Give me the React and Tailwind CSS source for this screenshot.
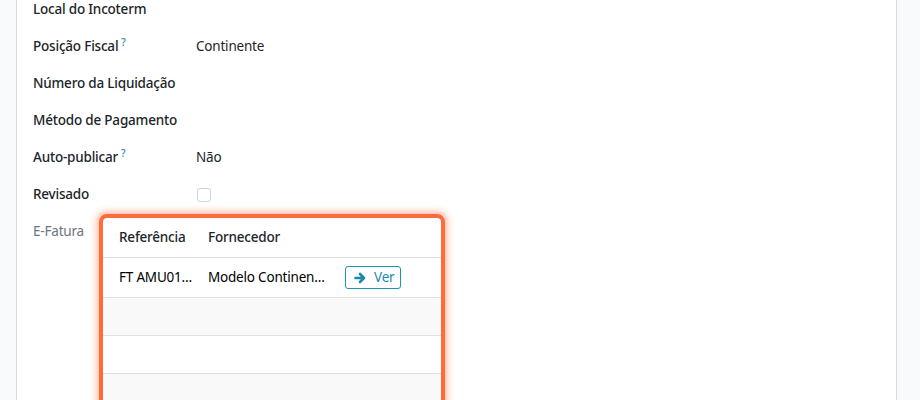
const fields = [
  { label: "Local do Incoterm" },
  { label: "Posição Fiscal", help: true, value: "Continente" },
  { label: "Número da Liquidação" },
  { label: "Método de Pagamento" },
  { label: "Auto-publicar", help: true, value: "Não" },
  { label: "Revisado", checkbox: true },
];

function Field({ field }) {
  return (
    <div className="h-[37px] flex items-center">
      <div className="w-[163px] shrink-0 font-medium text-[#212529]">
        {field.label}
        {field.help && (
          <sup className="ml-[3px] text-[10px] font-medium text-[#1b8aa8]">?</sup>
        )}
      </div>
      <div className="text-[#212529]">
        {field.value}
        {field.checkbox && (
          <div className="ml-[1px] w-[14px] h-[14px] rounded-[3px] border border-[#d0d3d7] bg-white" />
        )}
      </div>
    </div>
  );
}

function ArrowIcon() {
  return (
    <svg width="12" height="12" viewBox="0 0 12 12" fill="none">
      <path
        d="M1.5 6h8M6 2l4 4-4 4"
        stroke="currentColor"
        strokeWidth="2.6"
        strokeLinecap="round"
        strokeLinejoin="round"
      />
    </svg>
  );
}

function InvoicePopover() {
  const rows = ["bg-white", "bg-[#f9f9f9]", "bg-white", "bg-[#f9f9f9]"];
  return (
    <div className="absolute left-[82px] top-[214px] w-[346px] h-[200px] rounded-[8px] border-4 border-[#ff6b3d] shadow-[0_0_6px_3px_rgba(255,120,70,0.45)] bg-white overflow-hidden">
      <div className="h-[40px] flex items-center border-b border-[#dee2e6] font-medium text-[#212529]">
        <div className="w-[89px] pl-[16px] shrink-0 box-content">Referência</div>
        <div>Fornecedor</div>
      </div>
      {rows.map((bg, i) => (
        <div
          key={i}
          className={`${i === 0 ? "h-[40px]" : "h-[38px]"} flex items-center border-b border-[#dee2e6] ${bg}`}
        >
          {i === 0 && (
            <>
              <div className="w-[89px] pl-[16px] shrink-0 box-content whitespace-nowrap">FT AMU01…</div>
              <div className="w-[137px] shrink-0 whitespace-nowrap">Modelo Continen…</div>
              <button className="h-[23px] w-[56px] pl-[8px] flex items-center gap-[8px] rounded-[3px] border border-[#1b97ac] text-[#1b8aa8]">
                <ArrowIcon />
                <span>Ver</span>
              </button>
            </>
          )}
        </div>
      ))}
    </div>
  );
}

export default function App() {
  return (
    <div
      className="h-[400px] w-[920px] flex bg-[#f9fafb] text-[13.5px] tracking-[-0.2px] overflow-hidden"
      style={{ fontFamily: '"Noto Sans", "Open Sans", sans-serif' }}
    >
      <div className="w-[16px] shrink-0" />
      <div className="relative w-[881px] shrink-0 bg-white border-x border-[#d8dadd] pl-[16px]">
        <div className="-mt-[9px]">
          {fields.map((f) => (
            <Field key={f.label} field={f} />
          ))}
          <div className="h-[37px] flex items-center text-[#6c757d]">E-Fatura</div>
        </div>
        <InvoicePopover />
      </div>
    </div>
  );
}
